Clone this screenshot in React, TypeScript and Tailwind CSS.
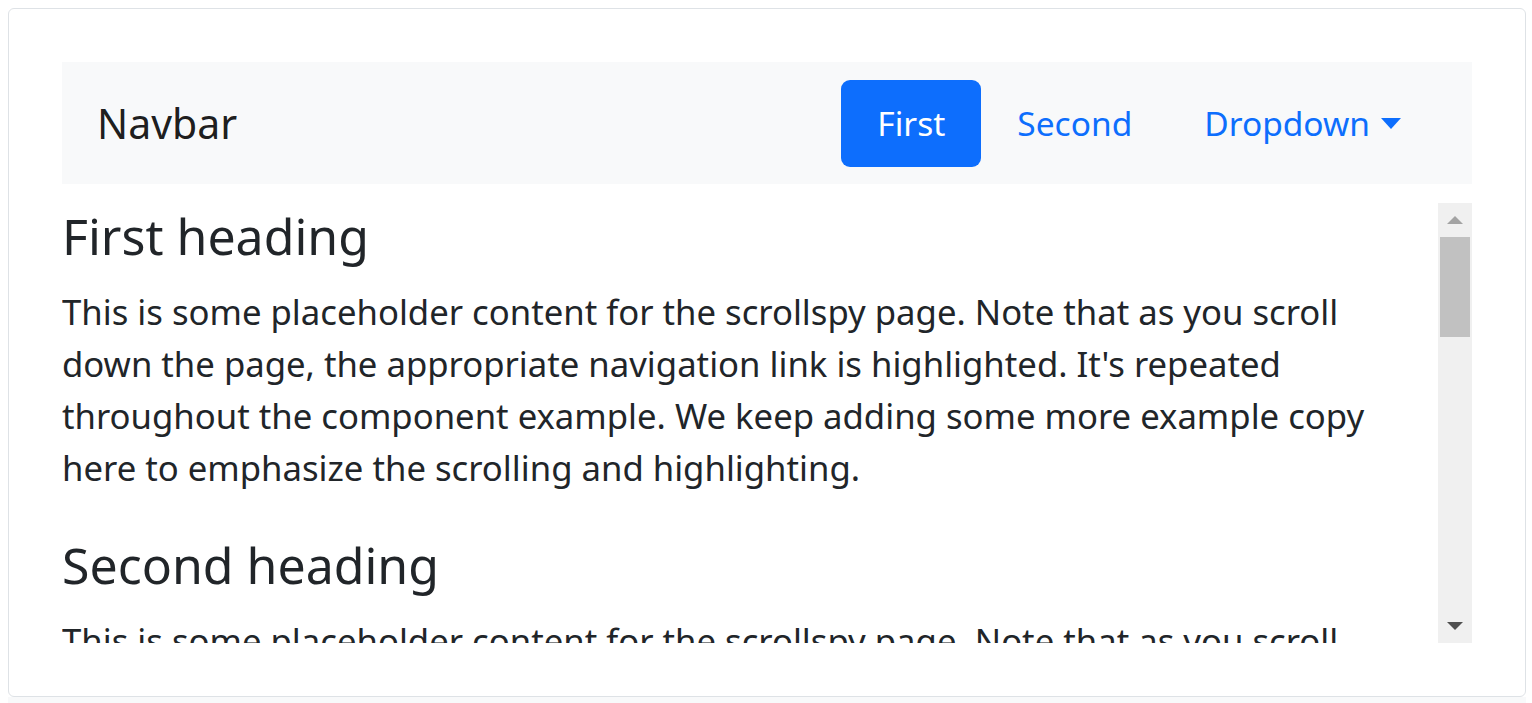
const paragraph =
  "This is some placeholder content for the scrollspy page. Note that as you scroll down the page, the appropriate navigation link is highlighted. It's repeated throughout the component example. We keep adding some more example copy here to emphasize the scrolling and highlighting.";

const sections = ['First heading', 'Second heading', 'Third heading', 'Fourth heading', 'Fifth heading'];

function NavLink({ label, active }: { label: string; active?: boolean }) {
  return (
    <a
      href="#"
      className={
        active
          ? 'flex h-[87px] items-center rounded-[9px] bg-[#0d6efd] px-[36px] text-white'
          : 'flex h-[87px] items-center px-[36px] text-[#0d6efd]'
      }
    >
      {label}
    </a>
  );
}

function FakeScrollbar() {
  return (
    <div className="flex w-[34px] shrink-0 flex-col items-center bg-[#f0f0f0]">
      <div className="flex h-[34px] w-full items-center justify-center">
        <svg width="18" height="10" viewBox="0 0 18 10">
          <path d="M9 1 L17 9 L1 9 Z" fill="#a3a3a3" />
        </svg>
      </div>
      <div className="h-[100px] w-[30px] bg-[#c1c1c1]" />
      <div className="flex-1" />
      <div className="flex h-[34px] w-full items-center justify-center">
        <svg width="18" height="10" viewBox="0 0 18 10">
          <path d="M1 1 L17 1 L9 9 Z" fill="#505050" />
        </svg>
      </div>
    </div>
  );
}

export default function App() {
  return (
    <div className="min-h-screen bg-white pl-[8px] pt-[8px] font-['Noto_Sans',sans-serif] text-[#212529]">
      <div className="w-[1518px] rounded-[6px] border border-[#dee2e6] p-[53px]">
        <nav className="flex h-[122px] items-center justify-between bg-[#f8f9fa] pl-[35px] pr-[35px]">
          <a href="#" className="text-[41px] leading-none text-black/90">
            Navbar
          </a>
          <div className="flex items-center text-[33.5px]">
            <NavLink label="First" active />
            <NavLink label="Second" />
            <a href="#" className="flex h-[87px] items-center px-[36px] text-[#0d6efd]">
              Dropdown
              <svg className="ml-[11px]" width="20" height="11" viewBox="0 0 20 11">
                <path d="M0 0 L20 0 L10 11 Z" fill="#0d6efd" />
              </svg>
            </a>
          </div>
        </nav>
        <div className="mt-[19px] flex h-[440px]">
          <div className="flex-1 overflow-hidden pr-[12px] pt-[3px]">
            {sections.map((s) => (
              <div key={s}>
                <h4 className="mb-[20px] text-[50px] leading-[60px] font-normal">{s}</h4>
                <p className="mb-[41px] text-[34.7px] leading-[52px]">{paragraph}</p>
              </div>
            ))}
          </div>
          <FakeScrollbar />
        </div>
      </div>
      <div className="h-[40px] w-[1518px] bg-[#f8f9fa]" />
    </div>
  );
}
